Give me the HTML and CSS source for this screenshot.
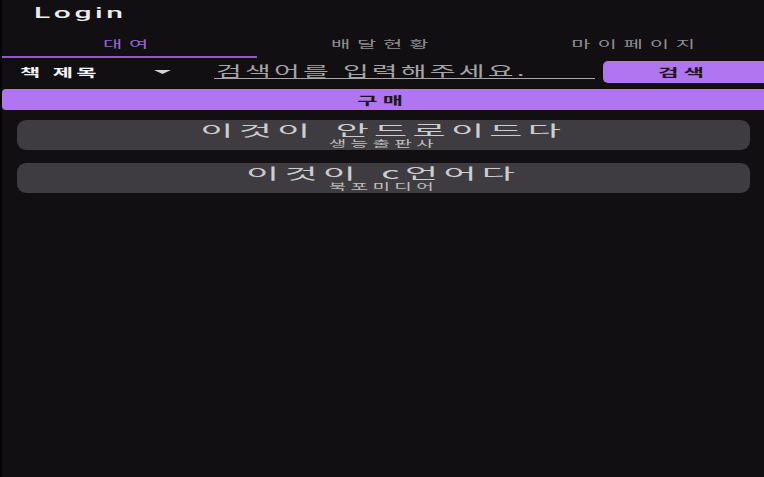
FILE: index.html
```html
<!DOCTYPE html>
<html lang="ko">
<head>
<meta charset="utf-8">
<title>Login</title>
<link rel="stylesheet" href="styles.css">
</head>
<body>
<div class="app">
  <header class="topbar"><span class="s s-left login">Login</span></header>
  <nav class="tabs">
    <div class="tab active"><span class="s tab-label">대여</span></div>
    <div class="tab"><span class="s tab-label">배달현황</span></div>
    <div class="tab"><span class="s tab-label">마이페이지</span></div>
  </nav>
  <div class="indicator-track"><div class="indicator"></div></div>
  <div class="search-row">
    <div class="select">
      <span class="s s-left select-label">책 제목</span>
      <svg class="caret" width="17" height="4" viewBox="0 0 17 4"><polygon points="0,0 17,0 8.5,4" fill="#d4d4d4"/></svg>
    </div>
    <div class="input"><span class="s s-left placeholder">검색어를 입력해주세요.</span></div>
    <button class="btn search-btn"><span class="s btn-label">검색</span></button>
  </div>
  <button class="btn buy-btn"><span class="s btn-label">구매</span></button>
  <ul class="book-list">
    <li class="card"><span class="s title">이것이 안드로이드다</span><span class="s sub">생능출판사</span></li>
    <li class="card"><span class="s title">이것이 c언어다</span><span class="s sub">북포미디어</span></li>
  </ul>
</div>
</body>
</html>
```
FILE: styles.css
```css
* { box-sizing: border-box; }
html, body { margin: 0; padding: 0; }
body {
  width: 764px;
  height: 477px;
  background: #110f12;
  overflow: hidden;
  font-family: "Noto Sans CJK KR", "Noto Sans", sans-serif;
}
.app {
  height: 477px;
  border-left: 2px solid #050405;
  display: flex;
  flex-direction: column;
}
.s {
  display: inline-block;
  white-space: nowrap;
  transform: scaleX(2);
  transform-origin: center center;
}
.s-left { transform-origin: left center; }

.topbar {
  height: 30px;
  padding-left: 32px;
  display: flex;
  align-items: center;
}
.login {
  font-family: Roboto, "Liberation Sans", sans-serif;
  font-weight: 500;
  font-size: 15px;
  letter-spacing: 1.8px;
  color: #ececec;
  line-height: 16px;
  margin-top: -5px;
}

.tabs {
  display: flex;
  height: 26px;
}
.tab {
  flex: 1;
  display: flex;
  align-items: center;
  justify-content: center;
  padding-top: 2px;
}
.tab-label {
  font-size: 10.5px;
  line-height: 14px;
  letter-spacing: 3.4px;
  color: #8e8e8e;
}
.tab.active .tab-label { color: #9a64d8; }

.indicator-track { height: 2px; display: flex; }
.indicator { width: 255px; background: #8d58d0; }

.search-row {
  margin-top: 3px;
  height: 22px;
  display: flex;
}
.select {
  width: 190px;
  padding: 0 21px 0 18px;
  display: flex;
  align-items: center;
  justify-content: space-between;
}
.select-label {
  font-size: 11px;
  font-weight: 700;
  letter-spacing: 1.6px;
  color: #f2f2f2;
  line-height: 14px;
}
.caret { display: block; }
.input {
  margin-left: 22px;
  width: 381px;
  height: 18px;
  border-bottom: 1px solid #a8a8a8;
  padding-left: 2px;
  display: flex;
  align-items: center;
}
.placeholder {
  font-size: 14px;
  letter-spacing: 1.6px;
  color: #a4a4a4;
  line-height: 16px;
}
.btn {
  border: 0;
  padding: 0;
  margin: 0;
  background: #b075f0;
  display: flex;
  align-items: center;
  justify-content: center;
  font-family: inherit;
}
.search-btn {
  margin-left: 8px;
  flex: 1;
  border-radius: 5px 0 0 5px;
}
.btn-label {
  font-size: 11px;
  font-weight: 700;
  letter-spacing: 2.7px;
  color: #1d1522;
  line-height: 14px;
}
.buy-btn {
  margin-top: 6px;
  height: 21px;
  border-radius: 4px 0 0 4px;
}

.book-list {
  list-style: none;
  margin: 0;
  padding: 10px 14px 0 15px;
  display: flex;
  flex-direction: column;
  gap: 13px;
}
.card {
  height: 30px;
  background: #3e3c40;
  border-radius: 9px;
  display: flex;
  flex-direction: column;
  align-items: center;
}
.title {
  font-size: 15px;
  letter-spacing: 2.2px;
  word-spacing: 2px;
  color: #cdcdcd;
  line-height: 17px;
  margin-top: 1px;
  transform: scaleX(2.4);
}
.sub {
  font-size: 9.5px;
  letter-spacing: 2.2px;
  color: #bdbdbd;
  line-height: 11px;
}
```
